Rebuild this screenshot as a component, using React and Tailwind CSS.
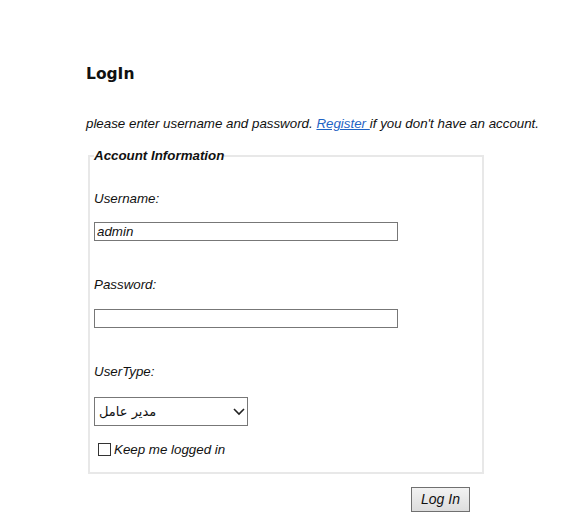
import React from 'react';

const App = () => {
  const [username, setUsername] = React.useState('admin');
  const [password, setPassword] = React.useState('');
  const [userType, setUserType] = React.useState('manager');
  const [remember, setRemember] = React.useState(false);

  return (
    <div className="min-h-[526px] bg-white pl-[86px] pt-[65px] text-[#111] font-['Liberation_Sans',Arial,sans-serif]">
      <h2 className="font-['DejaVu_Sans',Verdana,sans-serif] font-bold text-[15.5px] leading-[18px]">LogIn</h2>

      <p className="mt-[33px] italic text-[13.33px] leading-[15px]">
        please enter username and password.{' '}
        <a href="#" className="text-[#1f63c4] underline">Register </a>
        if you don't have an account.
      </p>

      <fieldset className="mt-[17px] ml-[2px] w-[396px] border-2 border-[#e8e8e8] pl-[4px] pb-[15px]">
        <legend className="font-bold italic text-[13.33px] leading-[15px] px-0">Account Information</legend>

        <label className="block mt-[28px] italic text-[13.33px] leading-[15px]">Username:</label>
        <input
          type="text"
          value={username}
          onChange={(e) => setUsername(e.target.value)}
          className="block mt-[16px] w-[304px] h-[19px] border border-[#777] px-[2px] italic text-[13.33px] leading-[15px] outline-none"
        />

        <label className="block mt-[36px] italic text-[13.33px] leading-[15px]">Password:</label>
        <input
          type="password"
          value={password}
          onChange={(e) => setPassword(e.target.value)}
          className="block mt-[17px] w-[304px] h-[19px] border border-[#777] px-[2px] text-[13.33px] outline-none"
        />

        <label className="block mt-[36px] italic text-[13.33px] leading-[15px]">UserType:</label>
        <div className="relative mt-[18px] w-[154px] h-[29px]">
          <select
            value={userType}
            onChange={(e) => setUserType(e.target.value)}
            className="appearance-none w-full h-full border border-[#777] bg-white pl-[4px] text-[13px] font-['DejaVu_Sans','Liberation_Sans',sans-serif] outline-none"
          >
            <option value="manager">مدير عامل</option>
            <option value="employee">موظف</option>
          </select>
          <svg className="pointer-events-none absolute right-[3px] top-[10px]" width="12" height="9" viewBox="0 0 12 9">
            <path d="M1 2 L6 7 L11 2" fill="none" stroke="#222" strokeWidth="1.6" />
          </svg>
        </div>

        <label className="flex items-center mt-[16px] italic text-[13.33px] leading-[15px]">
          <input
            type="checkbox"
            checked={remember}
            onChange={(e) => setRemember(e.target.checked)}
            className="appearance-none w-[13px] h-[13px] border border-[#333] bg-white ml-[4px] mr-[3px] my-[1px] checked:bg-[#1f63c4]"
          />
          Keep me logged in
        </label>
      </fieldset>

      <div className="w-[398px] flex justify-end pr-[14px] mt-[13px]">
        <button className="w-[59px] h-[25px] border border-[#707070] bg-gradient-to-b from-[#f2f2f2] to-[#dddddd] italic text-[14px] text-[#111]">
          Log In
        </button>
      </div>
    </div>
  );
};

export default App;
